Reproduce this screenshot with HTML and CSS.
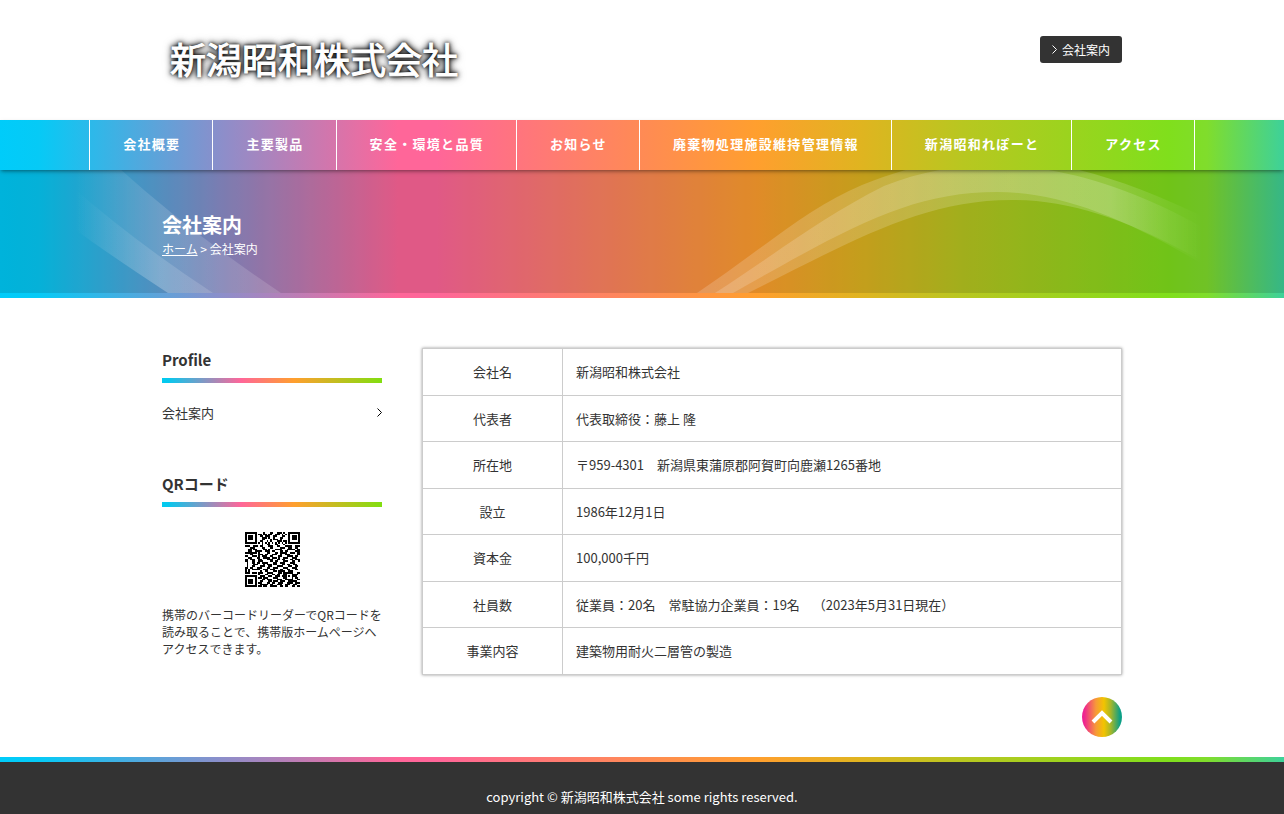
FILE: index.html
```html
<!DOCTYPE html>
<html lang="ja">

<head>
    <meta charset="UTF-8">
    <meta name="viewport" content="width=device-width, initial-scale=1.0">
    <title>会社案内 | 新潟昭和株式会社</title>
    <link rel="stylesheet" href="styles.css">
</head>

<body>
    <header class="header">
        <div class="inner header-inner">
            <a class="logo" href="#">新潟昭和株式会社</a>
            <a class="header-link" href="#">
                <svg class="chevron" viewBox="0 0 5 9" aria-hidden="true"><path d="M0.5 0.5l4 4-4 4"/></svg>
                会社案内
            </a>
        </div>
    </header>

    <nav class="nav">
        <ul class="nav-list">
            <li><a href="#">会社概要</a></li>
            <li><a href="#">主要製品</a></li>
            <li><a href="#">安全・環境と品質</a></li>
            <li><a href="#">お知らせ</a></li>
            <li><a href="#">廃棄物処理施設維持管理情報</a></li>
            <li><a href="#">新潟昭和れぽーと</a></li>
            <li><a href="#">アクセス</a></li>
        </ul>
    </nav>

    <div class="hero">
        <svg class="hero-wave" viewBox="0 0 1284 123" preserveAspectRatio="xMidYMid slice" aria-hidden="true">
            <defs>
                <linearGradient id="fade-left" gradientUnits="userSpaceOnUse" x1="75" y1="0" x2="160" y2="0">
                    <stop offset="0" stop-color="#fff" stop-opacity="0"/>
                    <stop offset="1" stop-color="#fff" stop-opacity="0.14"/>
                </linearGradient>
                <linearGradient id="fade-right" gradientUnits="userSpaceOnUse" x1="1110" y1="0" x2="1202" y2="0">
                    <stop offset="0" stop-color="#fff" stop-opacity="0.17"/>
                    <stop offset="1" stop-color="#fff" stop-opacity="0"/>
                </linearGradient>
            </defs>
            <path fill="url(#fade-left)" d="M70 -50Q150 35 281 123H168Q110 85 70 56z"/>
            <path fill="url(#fade-left)" d="M70 15Q135 72 213 123H168Q110 85 70 56z"/>
            <path fill="url(#fade-right)" d="M697 123C765 77 806 39 862 15C980 -34 1085 -10 1204 47V95C1125 48 1060 22 997 22C910 22 848 58 733 123z"/>
            <path fill="url(#fade-right)" d="M715 123C770 88 820 48 884 16C980 -22 1085 -8 1204 58V92C1125 48 1070 30 1011 30C920 30 845 75 748 123z"/>
        </svg>
        <div class="inner hero-inner">
            <h1>会社案内</h1>
            <p class="breadcrumb"><a href="#">ホーム</a> &gt; 会社案内</p>
        </div>
    </div>

    <div class="inner contents">
        <aside class="side">
            <section class="side-block">
                <h2>Profile</h2>
                <a class="side-link" href="#">
                    会社案内
                    <svg class="chevron" viewBox="0 0 5 9" aria-hidden="true"><path d="M0.5 0.5l4 4-4 4"/></svg>
                </a>
            </section>
            <section class="side-block">
                <h2>QRコード</h2>
                <svg class="qr" id="qr" viewBox="0 0 33 33" role="img" aria-label="QRコード" shape-rendering="crispEdges"></svg>
                <p class="qr-text">携帯のバーコードリーダーでQRコードを読み取ることで、携帯版ホームページへアクセスできます。</p>
            </section>
        </aside>

        <main class="main">
            <table class="profile">
                <tr>
                    <th scope="row">会社名</th>
                    <td>新潟昭和株式会社</td>
                </tr>
                <tr>
                    <th scope="row">代表者</th>
                    <td>代表取締役：藤上 隆</td>
                </tr>
                <tr>
                    <th scope="row">所在地</th>
                    <td>〒959-4301　新潟県東蒲原郡阿賀町向鹿瀬1265番地</td>
                </tr>
                <tr>
                    <th scope="row">設立</th>
                    <td>1986年12月1日</td>
                </tr>
                <tr>
                    <th scope="row">資本金</th>
                    <td>100,000千円</td>
                </tr>
                <tr>
                    <th scope="row">社員数</th>
                    <td>従業員：20名　常駐協力企業員：19名　（2023年5月31日現在）</td>
                </tr>
                <tr>
                    <th scope="row">事業内容</th>
                    <td>建築物用耐火二層管の製造</td>
                </tr>
            </table>
            <a class="page-top" href="#" aria-label="ページの先頭へ">
                <svg viewBox="0 0 40 40" aria-hidden="true"><path d="M11 25l9-9 9 9"/></svg>
            </a>
        </main>
    </div>

    <footer class="footer">
        <p>copyright © 新潟昭和株式会社 some rights reserved.</p>
    </footer>

    <script src="qr.js"></script>
</body>

</html>
```

FILE: styles.css
```css
* {
    box-sizing: border-box;
}

body {
    margin: 0;
    font-family: "Noto Sans CJK JP", sans-serif;
    font-size: 13px;
    line-height: 1.5;
    color: #333;
    background-color: #fff;
    text-spacing-trim: space-all;
}

h1,
h2,
p,
ul {
    margin: 0;
    padding: 0;
}

a {
    color: inherit;
    text-decoration: none;
}

.inner {
    max-width: 960px;
    margin: 0 auto;
}

.chevron {
    width: 5px;
    height: 9px;
    fill: none;
    stroke: currentColor;
}

/* header */
.header-inner {
    display: flex;
    justify-content: space-between;
    align-items: flex-start;
    height: 120px;
    padding-top: 36px;
}

.logo {
    padding-left: 8px;
    font-size: 36px;
    line-height: 44px;
    color: #fff;
    -webkit-text-stroke: 1px #fff;
    text-shadow: 0 0 3px #000, 0 0 5px #000, 0 0 7px #000, 0 0 10px rgba(0, 0, 0, 0.6);
}

.header-link {
    display: flex;
    align-items: center;
    gap: 5px;
    height: 27px;
    padding: 0 12px;
    border-radius: 3px;
    background-color: #333;
    color: #fff;
    font-size: 12px;
}

/* navigation */
.nav,
.hero,
.footer {
    background-image: linear-gradient(90deg, #00ccfa 0%, #06caf6 3%, #8a8fcb 17%, #ff6699 31%, #ff6699 34%, #ff9f2e 59%, #e0b420 67%, #b8c720 75%, #80df1c 91%, #80dd2c 94%, #3dd19a 100%);
}

.nav {
    position: relative;
    z-index: 1;
    box-shadow: 0 2px 4px -1px rgba(0, 0, 0, 0.5);
}

.nav-list {
    display: flex;
    justify-content: center;
    list-style: none;
}

.nav-list li {
    border-right: 1px solid #fff;
}

.nav-list li:first-child {
    border-left: 1px solid #fff;
}

.nav-list a {
    display: block;
    padding: 0 32px 2px 33px;
    line-height: 48px;
    font-weight: bold;
    letter-spacing: 0.1em;
    color: #fff;
}

/* page title */
.hero {
    position: relative;
    padding-bottom: 5px;
    color: #fff;
}

.hero-wave {
    position: absolute;
    top: 0;
    left: 0;
    width: 100%;
    height: calc(100% - 5px);
    background-color: rgba(0, 0, 0, 0.12);
}

.hero-inner {
    position: relative;
    padding: 40px 0 35px;
}

.hero h1 {
    font-size: 20px;
    line-height: 30px;
}

.breadcrumb {
    font-size: 12px;
}

.breadcrumb a {
    text-decoration: underline;
}

/* contents */
.contents {
    display: flex;
    gap: 40px;
    padding: 50px 0 20px;
}

.side {
    flex: 0 0 220px;
}

.side-block {
    margin-bottom: 50px;
}

.side-block h2 {
    padding-bottom: 7px;
    border-bottom: 5px solid;
    border-image: linear-gradient(90deg, #00ccf0 0%, #06c8ee 3%, #ff6699 36%, #ff9f2e 60%, #80df10 100%) 1;
    font-size: 15px;
    line-height: 23px;
}

.side-link {
    display: flex;
    justify-content: space-between;
    align-items: center;
    margin-top: 20px;
    line-height: 19px;
}

.side-link .chevron {
    color: #000;
}

.qr {
    display: block;
    width: 55px;
    height: 55px;
    margin: 25px auto 19px;
}

.qr-text {
    font-size: 12px;
    line-height: 17px;
}

.main {
    flex: 1;
}

.profile {
    width: 100%;
    border-collapse: collapse;
    box-shadow: 0 0 3px rgba(0, 0, 0, 0.4);
}

.profile th,
.profile td {
    padding: 13px;
    border: 1px solid #ccc;
    font-weight: normal;
    text-align: left;
}

.profile th {
    width: 140px;
    text-align: center;
}

.page-top {
    display: block;
    width: 40px;
    height: 40px;
    margin: 22px 0 0 auto;
    border-radius: 50%;
    background-image: linear-gradient(90deg, #ee2292 5%, #f79a38 35%, #f2c400 55%, #a5b62a 72%, #0c9f86 95%);
}

.page-top svg {
    display: block;
    fill: none;
    stroke: #fff;
    stroke-width: 4;
}

/* footer */
.footer {
    padding-top: 5px;
    color: #fff;
    text-align: center;
}

.footer p {
    padding: 25px 0 7px;
    background-color: #333;
    line-height: 20px;
}
```

FILE: qr.js
```js
const rows = [
    '111111100001000110011101001111111',
    '100000101101101100111010101000001',
    '101110100110111001100011001011101',
    '101110100011101001000110001011101',
    '101110100011000101110100001011101',
    '100000100110010100011101101000001',
    '111111101010101010101010101111111',
    '000000000010011000110001000000000',
    '111001110110001110011000111100111',
    '000111000011000110000111001100110',
    '001101100001101000111100011111011',
    '001100111100111011000110110000111',
    '111111101000011000110111100111011',
    '000110001110110011100100111000011',
    '110011101011100110001100011110110',
    '001100011001111011101001110011100',
    '110111001100011110011011000110111',
    '110011001110000110110001110011001',
    '010011011011110001100111000111000',
    '010001110001011101100011011001100',
    '010011000111001100011110001100110',
    '110110011100011001110001110011100',
    '101011111001110111000110011000110',
    '101000000100110001101111001110000',
    '111011101110011110001101111110011',
    '000000001000110011011001100011110',
    '111111100111001100111011101011100',
    '100000101101110001110001100010110',
    '101110100011011100011100111110011',
    '101110100110001101110111001111100',
    '101110101100011011001110011110111',
    '100000100111110110011100111001100',
    '111111101101100111100110110011011'
];

let d = '';
rows.forEach((row, y) => {
    [...row].forEach((cell, x) => {
        if (cell === '1') {
            d += `M${x} ${y}h1v1h-1z`;
        }
    });
});

const path = document.createElementNS('http://www.w3.org/2000/svg', 'path');
path.setAttribute('d', d);
document.getElementById('qr').appendChild(path);
```
